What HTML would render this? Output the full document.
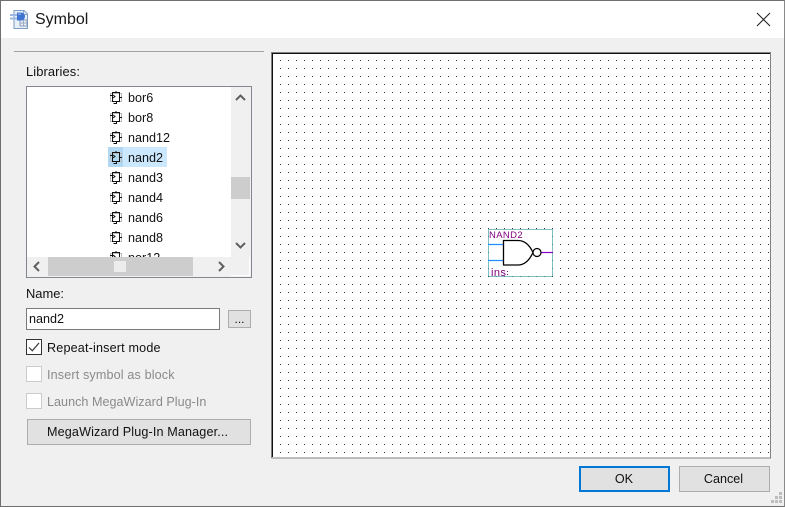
<!DOCTYPE html>
<html><head><meta charset="utf-8"><style>
html,body{margin:0;padding:0}
body{width:785px;height:507px;overflow:hidden;position:relative;background:#f0f0f0;font-family:"Liberation Sans",sans-serif;font-size:12.6px;color:#111}
.a{position:absolute;box-sizing:border-box;white-space:nowrap}
.t{position:absolute;white-space:nowrap;line-height:16px}
.i{position:absolute;left:110px;width:12px;height:13px}
.btn{position:absolute;box-sizing:border-box;background:#e1e1e1;border:1px solid #adadad;text-align:center}
.cb{position:absolute;box-sizing:border-box;left:26px;width:16px;height:16px;background:#fff;border:1px solid #ccc}
</style></head><body>
<svg width="0" height="0" style="position:absolute"><defs>
<symbol id="ic" viewBox="0 0 12 13"><rect x="0.5" y="2.5" width="11" height="8" fill="none" stroke="#bbb"/><path d="M2.500 1.500H9.500V10.500H2.500ZM6.500 10.500V12.500H3.500M0 4.500H2.500M9.500 6.500H12M6 0V1.500M3 4L5 5.500L3 7" fill="none" stroke="#111" stroke-width="1"/></symbol>
<pattern id="d" x="280" y="60" width="8" height="8" patternUnits="userSpaceOnUse"><rect width="1" height="1" fill="#333"/></pattern>
</defs></svg>

<!-- title bar -->
<div class="a" style="left:0;top:0;width:785px;height:38px;background:#fff"></div>
<svg class="a" style="left:10px;top:9px" width="19" height="21" viewBox="0 0 19 21">
<path d="M4 1.500H14L17.500 5V19.500H4Z" fill="#e8f0fa" stroke="#7c9cc4"/>
<path d="M13.500 2V5.500H17" fill="none" stroke="#8fa9cc"/>
<rect x="10" y="11" width="7" height="6" fill="none" stroke="#8a9cb4"/><path d="M10 14H17M13.500 11V17" stroke="#9aaabf"/>
<path d="M0 6H7M0 9.500H7" stroke="#9db8e0" stroke-width="2"/>
<path d="M7 3.500H11A4 4 0 0 1 11 11.500H7Z" fill="#3f74d0"/><path d="M8 5H11" stroke="#a9c6f2"/>
</svg>
<div class="t" style="left:35px;top:11px;font-size:16px;line-height:18px;color:#1a1a1a">Symbol</div>
<svg class="a" style="left:756px;top:12px" width="15" height="15" viewBox="0 0 15 15"><path d="M1 1L14 14M14 1L1 14" stroke="#222" stroke-width="1.100"/></svg>

<div class="a" style="left:14px;top:51px;width:250px;height:1px;background:#a0a0a0"></div>
<div class="t" style="left:26px;top:64px;font-size:12.9px;letter-spacing:.1px">Libraries:</div>

<!-- list -->
<div class="a" style="left:26px;top:86px;width:226px;height:192px;background:#f0f0f0;border:1px solid #828790"></div>
<div class="a" style="left:27px;top:87px;width:204px;height:170px;background:#fff;overflow:hidden">
 <div class="a" style="left:81px;top:60px;width:59px;height:20px;background:#cce8ff"></div>
 <div class="a" style="left:81px;top:60px;width:15px;height:20px;background:#9cc8e8;opacity:.55"></div>
 <svg class="i" style="left:83px;top:4px"><use href="#ic"/></svg><div class="t" style="left:101px;top:3px">bor6</div>
 <svg class="i" style="left:83px;top:24px"><use href="#ic"/></svg><div class="t" style="left:101px;top:23px">bor8</div>
 <svg class="i" style="left:83px;top:44px"><use href="#ic"/></svg><div class="t" style="left:101px;top:43px">nand12</div>
 <svg class="i" style="left:83px;top:64px"><use href="#ic"/></svg><div class="t" style="left:101px;top:63px">nand2</div>
 <svg class="i" style="left:83px;top:84px"><use href="#ic"/></svg><div class="t" style="left:101px;top:83px">nand3</div>
 <svg class="i" style="left:83px;top:104px"><use href="#ic"/></svg><div class="t" style="left:101px;top:103px">nand4</div>
 <svg class="i" style="left:83px;top:124px"><use href="#ic"/></svg><div class="t" style="left:101px;top:123px">nand6</div>
 <svg class="i" style="left:83px;top:144px"><use href="#ic"/></svg><div class="t" style="left:101px;top:143px">nand8</div>
 <svg class="i" style="left:83px;top:164px"><use href="#ic"/></svg><div class="t" style="left:101px;top:163px">nor12</div>
</div>
<!-- vertical scrollbar -->
<div class="a" style="left:231px;top:177px;width:19px;height:22px;background:#cdcdcd"></div>
<svg class="a" style="left:231px;top:87px" width="19" height="170" viewBox="0 0 19 170"><path d="M5 13L9.500 8.500L14 13M5 156L9.500 160.500L14 156" fill="none" stroke="#606060" stroke-width="2"/></svg>
<!-- horizontal scrollbar -->
<div class="a" style="left:48px;top:257px;width:145px;height:19px;background:#cdcdcd"></div>
<div class="a" style="left:114px;top:261px;width:12px;height:11px;background:#ececec"></div>
<svg class="a" style="left:27px;top:257px" width="204" height="19" viewBox="0 0 204 19"><path d="M12 5L7.500 9.500L12 14M192 5L196.500 9.500L192 14" fill="none" stroke="#606060" stroke-width="2"/></svg>
<div class="a" style="left:231px;top:257px;width:19px;height:19px;background:#f0f0f0;border-right:1px solid #fff;border-bottom:1px solid #fff"></div>

<div class="t" style="left:26px;top:286px;font-size:12.9px">Name:</div>
<div class="a" style="left:26px;top:308px;width:194px;height:22px;background:#fff;border:1px solid #7a7a7a;padding-left:2px;line-height:21px;font-size:12.6px">nand2</div>
<div class="btn" style="left:228px;top:310px;width:23px;height:18px;line-height:17px;font-size:12px">...</div>

<div class="cb" style="left:26px;top:339px;border-color:#333"></div>
<svg class="a" style="left:26px;top:339px" width="16" height="16" viewBox="0 0 16 16"><path d="M3 8.500L6.300 11.800L13 4" fill="none" stroke="#333" stroke-width="1.200"/></svg>
<div class="t" style="left:47px;top:340px;letter-spacing:.17px">Repeat-insert mode</div>
<div class="cb" style="top:366px"></div>
<div class="t" style="left:47px;top:367px;color:#8a8a8a;letter-spacing:.14px">Insert symbol as block</div>
<div class="cb" style="top:393px"></div>
<div class="t" style="left:47px;top:394px;color:#8a8a8a;letter-spacing:.02px">Launch MegaWizard Plug-In</div>
<div class="btn" style="left:27px;top:419px;width:224px;height:26px;line-height:25px;text-align:left;padding-left:19px;letter-spacing:.14px">MegaWizard Plug-In Manager...</div>

<!-- canvas -->
<svg class="a" style="left:0;top:0" width="785" height="507">
<rect x="272" y="52" width="499" height="406" fill="#fff"/>
<rect x="272" y="52" width="499" height="406" fill="url(#d)"/>
<path d="M771 52.500H271.500V458M271.500 458H771M770.500 52V458" fill="none" stroke="#808080"/>
<path d="M272 53.500H770M272.500 53V457" stroke="#111"/>
<rect x="488.500" y="229.500" width="64" height="47" fill="#fff"/>
<rect x="488.500" y="229.500" width="64" height="47" fill="none" stroke="#007f7f" stroke-dasharray="1 1"/>
<path d="M488 244.500H503.500M488 260.500H503.500" stroke="#1e90ff" stroke-width="1.200"/>
<path d="M541 252.500H553" stroke="#8a00c8" stroke-width="1.200"/>
<path d="M503.500 240.500H518C525 240.500 530 246 533 252.500C530 259 525 265 518 265H503.500Z" fill="#fff" stroke="#000" stroke-width="1.300"/>
<circle cx="537" cy="252.500" r="4" fill="#fff" stroke="#000" stroke-width="1.200"/>
<text x="489" y="238" font-family="Liberation Sans" font-size="9.500" fill="#800080" letter-spacing=".35">NAND2</text>
<text x="491" y="276" font-family="Liberation Sans" font-size="11" fill="#800080" letter-spacing=".4">ins</text>
<path d="M507 274h1v1h-1zM507 271h1v1h-1z" fill="#800080"/>
</svg>

<div class="btn" style="left:579px;top:466px;width:91px;height:26px;border:2px solid #0078d7;line-height:23px;padding-right:1px">OK</div>
<div class="btn" style="left:679px;top:466px;width:91px;height:26px;line-height:24px;padding-right:2px">Cancel</div>
<svg class="a" style="left:771px;top:491px" width="13" height="14" viewBox="0 0 13 14"><path d="M8 1h3v3H8zM4 5h3v3H4zM8 5h3v3H8zM0 9h3v3H0zM4 9h3v3H4zM8 9h3v3H8z" fill="#bdbdbd"/></svg>

<!-- window border -->
<div class="a" style="left:0;top:0;width:785px;height:507px;border:1px solid #6f6f6f;border-right-color:#8a8a8a;pointer-events:none"></div>
</body></html>
